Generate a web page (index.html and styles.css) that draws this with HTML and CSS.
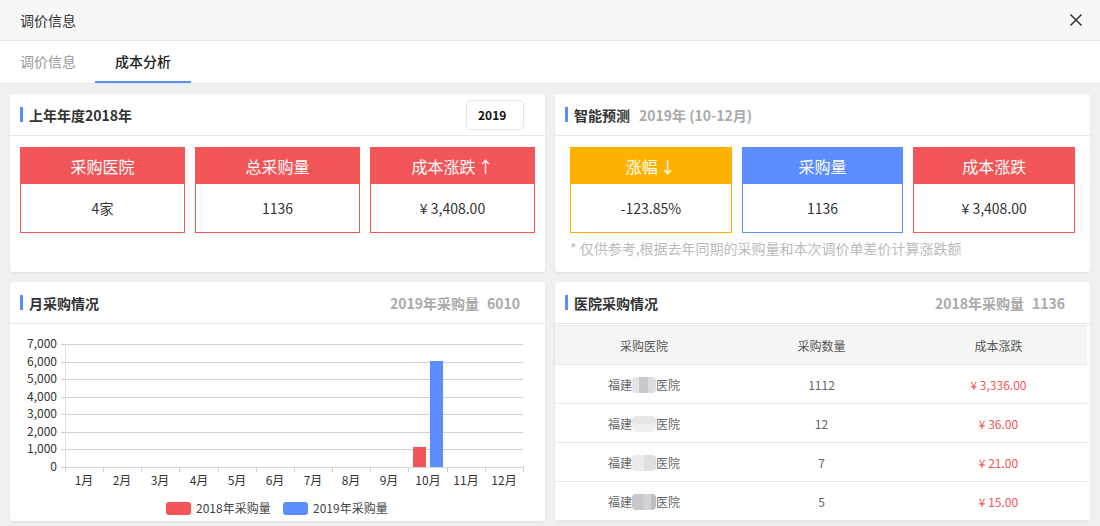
FILE: index.html
```html
<!DOCTYPE html>
<html lang="zh-CN">
<head>
<meta charset="utf-8">
<title>调价信息</title>
<link rel="stylesheet" href="styles.css">
</head>
<body>
<div class="dlg-head">
  <span class="dlg-title">调价信息</span>
  <svg class="close" width="14" height="14" viewBox="0 0 14 14"><path d="M1.5 1.5 L12.5 12.5 M12.5 1.5 L1.5 12.5" stroke="#333" stroke-width="1.5" fill="none"/></svg>
</div>
<div class="tabs">
  <div class="tab">调价信息</div>
  <div class="tab active">成本分析</div>
</div>
<main class="content">
  <section class="card">
    <header class="card-head sel">
      <h3 class="card-title">上年年度2018年</h3>
      <div class="year-select">2019</div>
    </header>
    <div class="stats">
      <div class="stat red"><div class="stat-h">采购医院</div><div class="stat-v">4家</div></div>
      <div class="stat red"><div class="stat-h">总采购量</div><div class="stat-v">1136</div></div>
      <div class="stat red"><div class="stat-h">成本涨跌<span class="arrow">↑</span></div><div class="stat-v">¥ 3,408.00</div></div>
    </div>
  </section>
  <section class="card">
    <header class="card-head">
      <h3 class="card-title">智能预测<span class="sub">2019年 (10-12月)</span></h3>
    </header>
    <div class="stats wide">
      <div class="stat yellow"><div class="stat-h">涨幅<span class="arrow">↓</span></div><div class="stat-v">-123.85%</div></div>
      <div class="stat blue"><div class="stat-h">采购量</div><div class="stat-v">1136</div></div>
      <div class="stat red"><div class="stat-h">成本涨跌</div><div class="stat-v">¥ 3,408.00</div></div>
    </div>
    <p class="note">* 仅供参考,根据去年同期的采购量和本次调价单差价计算涨跌额</p>
  </section>
  <section class="card">
    <header class="card-head">
      <h3 class="card-title">月采购情况</h3>
      <div class="head-stat">2019年采购量<span class="num">6010</span></div>
    </header>
    <svg class="chart" width="535" height="197" viewBox="0 0 535 197">
      <g stroke="#d0d0d0" stroke-width="1">
        <line x1="51" y1="20.5" x2="513" y2="20.5"/>
        <line x1="51" y1="38.5" x2="513" y2="38.5"/>
        <line x1="51" y1="55.5" x2="513" y2="55.5"/>
        <line x1="51" y1="73.5" x2="513" y2="73.5"/>
        <line x1="51" y1="90.5" x2="513" y2="90.5"/>
        <line x1="51" y1="108.5" x2="513" y2="108.5"/>
        <line x1="51" y1="125.5" x2="513" y2="125.5"/>
        <line x1="51" y1="143.5" x2="513" y2="143.5"/>
        <line x1="55.5" y1="20" x2="55.5" y2="143" stroke="#e0e0e0"/>
      </g>
      <g stroke="#d0d0d0" stroke-width="1">
        <line x1="55.5" y1="143" x2="55.5" y2="148"/>
        <line x1="93.5" y1="143" x2="93.5" y2="148"/>
        <line x1="131.5" y1="143" x2="131.5" y2="148"/>
        <line x1="169.5" y1="143" x2="169.5" y2="148"/>
        <line x1="208.5" y1="143" x2="208.5" y2="148"/>
        <line x1="246.5" y1="143" x2="246.5" y2="148"/>
        <line x1="284.5" y1="143" x2="284.5" y2="148"/>
        <line x1="322.5" y1="143" x2="322.5" y2="148"/>
        <line x1="360.5" y1="143" x2="360.5" y2="148"/>
        <line x1="398.5" y1="143" x2="398.5" y2="148"/>
        <line x1="437.5" y1="143" x2="437.5" y2="148"/>
        <line x1="475.5" y1="143" x2="475.5" y2="148"/>
        <line x1="513.5" y1="143" x2="513.5" y2="148"/>
      </g>
      <g class="ylab" text-anchor="end">
        <text x="47" y="24">7,000</text>
        <text x="47" y="42">6,000</text>
        <text x="47" y="59">5,000</text>
        <text x="47" y="77">4,000</text>
        <text x="47" y="94">3,000</text>
        <text x="47" y="112">2,000</text>
        <text x="47" y="129">1,000</text>
        <text x="47" y="147">0</text>
      </g>
      <g class="xlab" text-anchor="middle">
        <text x="74" y="161">1月</text>
        <text x="112" y="161">2月</text>
        <text x="150" y="161">3月</text>
        <text x="189" y="161">4月</text>
        <text x="227" y="161">5月</text>
        <text x="265" y="161">6月</text>
        <text x="303" y="161">7月</text>
        <text x="341" y="161">8月</text>
        <text x="379" y="161">9月</text>
        <text x="418" y="161">10月</text>
        <text x="456" y="161">11月</text>
        <text x="494" y="161">12月</text>
      </g>
      <rect x="403" y="123" width="13" height="20" fill="#f25658"/>
      <rect x="420" y="37" width="13" height="106" fill="#5b8dff"/>
      <rect x="156" y="178" width="25" height="13" rx="3" fill="#f25658"/>
      <text class="leg" x="186" y="189">2018年采购量</text>
      <rect x="273" y="178" width="25" height="13" rx="3" fill="#5b8dff"/>
      <text class="leg" x="303" y="189">2019年采购量</text>
    </svg>
  </section>
  <section class="card">
    <header class="card-head">
      <h3 class="card-title">医院采购情况</h3>
      <div class="head-stat">2018年采购量<span class="num">1136</span></div>
    </header>
    <div class="tbl">
      <div class="tr thead"><div>采购医院</div><div>采购数量</div><div>成本涨跌</div></div>
      <div class="tr"><div>福建<span class="mosaic m1"></span>医院</div><div>1112</div><div class="cost">¥ 3,336.00</div></div>
      <div class="tr"><div>福建<span class="mosaic m2"></span>医院</div><div>12</div><div class="cost">¥ 36.00</div></div>
      <div class="tr"><div>福建<span class="mosaic m3"></span>医院</div><div>7</div><div class="cost">¥ 21.00</div></div>
      <div class="tr"><div>福建<span class="mosaic m4"></span>医院</div><div>5</div><div class="cost">¥ 15.00</div></div>
    </div>
  </section>
</main>
</body>
</html>
```
FILE: styles.css
```css
* { box-sizing: border-box; margin: 0; padding: 0; }
html, body { width: 1100px; height: 526px; overflow: hidden; }
body {
  font-family: "Noto Sans CJK SC", "Noto Sans", sans-serif;
  color: #333;
  background: #f0f0f0;
}
.dlg-head {
  height: 41px;
  background: #f7f7f7;
  border-bottom: 1px solid #e8e8e8;
  display: flex;
  align-items: center;
  justify-content: space-between;
  padding: 0 17px 0 20px;
}
.dlg-title { font-size: 14px; line-height: 20px; color: #333; }
.close { display: block; }
.tabs {
  height: 43px;
  background: #fff;
  border-bottom: 1px solid #e4e4e4;
  display: flex;
}
.tab {
  height: 42px;
  padding: 0 20px;
  font-size: 14px;
  line-height: 40px;
  color: #999;
}
.tab:first-child { padding-right: 19px; }
.tab.active {
  color: #222;
  font-weight: 500;
  border-bottom: 2px solid #5b8dff;
}
.content {
  display: grid;
  grid-template-columns: 535px 535px;
  grid-template-rows: 178px 239px;
  gap: 10px;
  padding: 10px;
}
.card {
  background: #fff;
  border-radius: 3px;
  box-shadow: 0 1px 3px rgba(0, 0, 0, 0.07);
  overflow: hidden;
}
.card-head {
  height: 42px;
  border-bottom: 1px solid #e8e8e8;
  display: flex;
  align-items: center;
  justify-content: space-between;
  padding: 0 25px 0 10px;
}
.card-head.sel { padding-right: 21px; }
.card-title {
  display: flex;
  align-items: center;
  font-size: 14px;
  font-weight: 700;
  line-height: 20px;
  color: #333;
}
.card-title::before {
  content: "";
  width: 3px;
  height: 15px;
  background: #5b8dff;
  margin-right: 6px;
}
.card-title .sub { color: #aaa; margin-left: 9px; }
.year-select {
  width: 58px;
  height: 30px;
  border: 1px solid #e8e8e8;
  border-radius: 4px;
  font-size: 12px;
  font-weight: 700;
  line-height: 28px;
  padding-left: 11px;
  color: #111;
}
.head-stat {
  font-size: 14px;
  font-weight: 700;
  color: #aaa;
  line-height: 20px;
}
.head-stat .num { margin-left: 8px; }
.stats {
  display: flex;
  gap: 10px;
  padding: 11px 10px 0;
}
.stats.wide { padding: 11px 15px 0; }
.stat { flex: 1; border: 1px solid var(--c); --c: #f25658; }
.stat.red { --c: #f25658; }
.stat.yellow { --c: #fbb300; }
.stat.blue { --c: #5b8dff; }
.stat-h {
  height: 36px;
  background: var(--c);
  color: #fff;
  font-size: 16px;
  line-height: 36px;
  text-align: center;
}
.arrow { margin-left: 2px; }
.stat-v {
  height: 48px;
  font-size: 14px;
  line-height: 48px;
  text-align: center;
  color: #333;
}
.note {
  padding: 5px 15px 0;
  font-size: 14px;
  line-height: 20px;
  color: #bbb;
}
.chart { display: block; font-family: "Noto Sans CJK SC", "Noto Sans", sans-serif; }
.chart .ylab text, .chart .xlab text { font-size: 12px; fill: #333; }
.chart .leg { font-size: 12px; fill: #444; }
.tbl {
  width: 532px;
  margin-top: 1px;
  border-top: 1px solid #e8e8e8;
}
.tr {
  display: grid;
  grid-template-columns: 178px 177px 177px;
  height: 39px;
  align-items: center;
  border-bottom: 1px solid #e8e8e8;
  text-align: center;
  font-size: 12px;
  color: #666;
}
.tr.thead { background: #f5f5f5; color: #555; }
.cost { color: #f25658; }
.mosaic {
  display: inline-block;
  width: 24px;
  height: 16px;
  vertical-align: -3px;
  border-radius: 4px;
}
.m1 { background: linear-gradient(to right, #e4e4e6 0 30%, #c9c9cd 30% 65%, #dcdcdf 65%); }
.m2 { background: linear-gradient(to bottom, #e6e6e8 0 50%, #eeeff0 50%); }
.m3 { background: linear-gradient(to right, #ececee 0 50%, #e0e0e2 50%); }
.m4 { background: linear-gradient(to right, #c8c8cc 0 45%, #d3d3d6 45% 80%, #bdbdc1 80%); }
```
